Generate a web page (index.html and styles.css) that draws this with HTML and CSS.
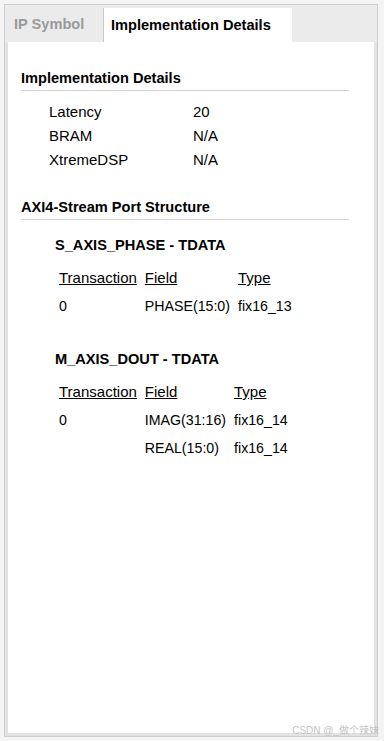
FILE: index.html
```html
<!DOCTYPE html>
<html>
<head>
<meta charset="utf-8">
<link rel="stylesheet" href="styles.css">
</head>
<body>
<div class="frame">
  <div class="tabs">
    <div class="tab">IP Symbol</div>
    <div class="tab active">Implementation Details</div>
  </div>
  <div class="panel">
    <h2 class="section">Implementation Details</h2>
    <div class="props">
      <div class="prop"><span class="k">Latency</span><span class="v">20</span></div>
      <div class="prop"><span class="k">BRAM</span><span class="v">N/A</span></div>
      <div class="prop"><span class="k">XtremeDSP</span><span class="v">N/A</span></div>
    </div>
    <h2 class="section">AXI4-Stream Port Structure</h2>
    <div class="port">
      <h3 class="port-title">S_AXIS_PHASE - TDATA</h3>
      <table class="fields">
        <tr><th>Transaction</th><th>Field</th><th>Type</th></tr>
        <tr><td>0</td><td>PHASE(15:0)</td><td>fix16_13</td></tr>
      </table>
    </div>
    <div class="port">
      <h3 class="port-title">M_AXIS_DOUT - TDATA</h3>
      <table class="fields">
        <tr><th>Transaction</th><th>Field</th><th>Type</th></tr>
        <tr><td>0</td><td>IMAG(31:16)</td><td>fix16_14</td></tr>
        <tr><td></td><td>REAL(15:0)</td><td>fix16_14</td></tr>
      </table>
    </div>
  </div>
</div>
<div class="watermark">CSDN @_做个辣妹</div>
</body>
</html>
```

FILE: styles.css
```css
html, body {
  margin: 0;
  padding: 0;
  background: #f4f4f4;
  font-family: "Liberation Sans", Arial, "Noto Sans CJK SC", sans-serif;
  font-size: 15px;
  color: #000;
}
.frame {
  margin: 4px 6px 4px 4px;
  height: 731px;
  border: 1px solid #cfcfcf;
  background: #ebebeb;
  display: flex;
  flex-direction: column;
}
.tabs {
  display: flex;
  height: 37px;
  flex: none;
}
.tab {
  width: 98px;
  padding-left: 9px;
  box-sizing: border-box;
  font-weight: bold;
  font-size: 14.6px;
  color: #9a9a9a;
  line-height: 39px;
}
.tab.active {
  width: 189px;
  margin-top: 3px;
  line-height: 35px;
  padding-left: 7px;
  background: #fff;
  color: #000;
  border-left: 1px solid #c9c9c9;
}
.panel {
  flex: 1;
  background: #fff;
  border: 3px solid #e3e3e3;
  border-top: none;
  padding: 27px 25px 0 13px;
}
.section {
  margin: 0;
  font-size: 14.6px;
  font-weight: bold;
  line-height: 18px;
  padding-bottom: 3px;
  border-bottom: 1px solid #d3d3d3;
}
.props {
  padding: 9px 0 26px 28px;
}
.prop {
  display: flex;
  line-height: 24px;
}
.prop .k {
  width: 144px;
}
.port {
  padding-left: 34px;
}
.port-title {
  margin: 0;
  font-size: 14.6px;
  font-weight: bold;
  line-height: 18px;
  padding-top: 16px;
}
.fields {
  border-collapse: collapse;
  margin-top: 10px;
  margin-bottom: 14px;
}
.fields th {
  font-weight: normal;
  text-decoration: underline;
  text-align: left;
  padding: 0 4px;
  line-height: 28px;
}
.fields td {
  font-size: 14.2px;
  padding: 0 4px;
  line-height: 28px;
}
.watermark {
  position: absolute;
  right: 5px;
  top: 722px;
  font-size: 10px;
  color: #c4c4c4;
}
```
